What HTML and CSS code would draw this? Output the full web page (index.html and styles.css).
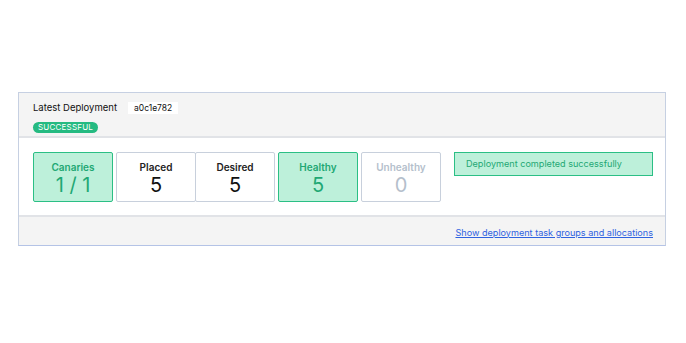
FILE: index.html
```html
<!DOCTYPE html>
<html>
<head>
<meta charset="utf-8">
<link rel="stylesheet" href="styles.css">
</head>
<body>
<div class="card">
  <div class="card-header">
    <div class="title-row">
      <span class="title">Latest Deployment</span>
      <span class="hash">a0c1e782</span>
    </div>
    <span class="status">SUCCESSFUL</span>
  </div>
  <div class="card-body">
    <div class="stats">
      <div class="stat is-success">
        <div class="label">Canaries</div>
        <div class="value">1 / 1</div>
      </div>
      <div class="pair">
        <div class="stat">
          <div class="label">Placed</div>
          <div class="value">5</div>
        </div>
        <div class="stat">
          <div class="label">Desired</div>
          <div class="value">5</div>
        </div>
      </div>
      <div class="stat is-success">
        <div class="label">Healthy</div>
        <div class="value">5</div>
      </div>
      <div class="stat is-faded">
        <div class="label">Unhealthy</div>
        <div class="value">0</div>
      </div>
    </div>
    <div class="message">Deployment completed successfully</div>
  </div>
  <div class="card-footer">
    <a href="#" class="link">Show deployment task groups and allocations</a>
  </div>
</div>
</body>
</html>
```
FILE: styles.css
```css
html, body {
  margin: 0;
  padding: 0;
  background: #ffffff;
}
body {
  font-family: Inter, "Noto Sans", sans-serif;
  color: #0a0a0a;
  padding: 92px 20px 0 18px;
}
.card {
  width: 646px;
  border: 1px solid #c6d0e2;
  border-bottom-color: #b4c3e6;
  box-sizing: content-box;
}
.card-header {
  background: #f4f4f4;
  height: 45px;
  padding: 8px 14px 0;
  box-sizing: border-box;
  border-bottom: 2px solid #e1e3e7;
}
.title-row {
  display: flex;
  align-items: center;
  height: 13px;
}
.title {
  font-size: 9.5px;
  color: #111;
  width: 95px;
}
.hash {
  background: #ffffff;
  font-size: 8.5px;
  padding: 1px 6px;
  line-height: 10px;
  color: #111;
}
.status {
  display: inline-block;
  margin-top: 5px;
  background: #25ba81;
  color: #fff;
  font-size: 8px;
  line-height: 11px;
  padding: 0 5px;
  border-radius: 6px;
  letter-spacing: 0.2px;
}
.card-body {
  display: flex;
  align-items: flex-start;
  padding: 14px 12px 0 14px;
  height: 79px;
  box-sizing: border-box;
  border-bottom: 2px solid #e1e3e7;
}
.stats {
  display: flex;
  gap: 3px;
}
.pair {
  display: flex;
}
.pair .stat + .stat {
  margin-left: -1px;
}
.stat {
  width: 80px;
  height: 50px;
  box-sizing: border-box;
  border: 1px solid #c8d0dc;
  border-radius: 2px;
  background: #fff;
  display: flex;
  flex-direction: column;
  align-items: center;
  padding-top: 8px;
}
.label {
  font-size: 10px;
  font-weight: 600;
  line-height: 13px;
  color: #222;
}
.value {
  font-size: 20px;
  line-height: 22px;
  color: #111;
}
.is-success {
  background: #bdf0da;
  border-color: #2bbf85;
}
.is-success .label, .is-success .value {
  color: #1fa874;
}
.is-faded .label, .is-faded .value {
  color: #b5bfcc;
}
.message {
  margin-left: auto;
  width: 199px;
  height: 24px;
  box-sizing: border-box;
  border: 1px solid #2bbf85;
  background: #bdf0da;
  color: #1fa874;
  font-size: 9.1px;
  line-height: 22px;
  padding-left: 11px;
}
.card-footer {
  background: #f4f4f4;
  height: 28px;
  display: flex;
  align-items: center;
  justify-content: flex-end;
  padding: 2px 12px 0 0;
  box-sizing: border-box;
}
.link {
  color: #2f62e0;
  font-size: 9.1px;
  text-decoration: underline;
}
```
